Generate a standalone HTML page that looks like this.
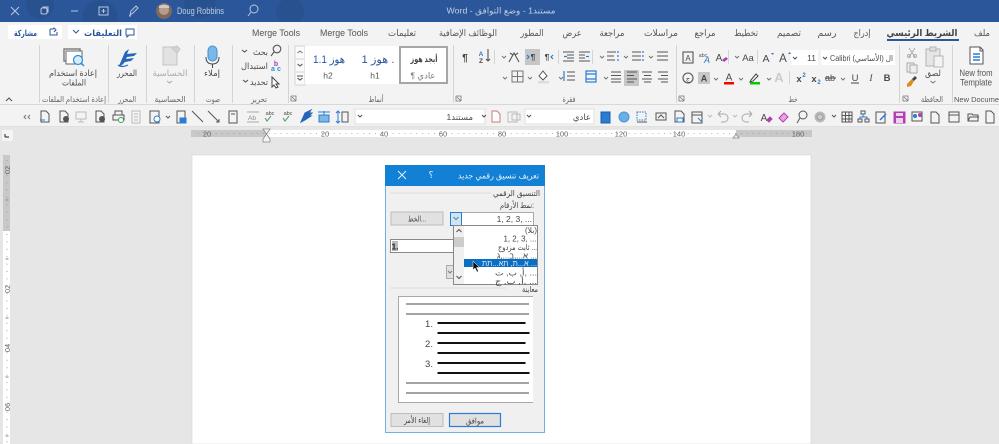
<!DOCTYPE html>
<html><head><meta charset="utf-8"><style>
html,body{margin:0;padding:0;background:#e6e6e6;width:999px;height:444px;overflow:hidden}
svg{display:block;filter:blur(.35px)}
text{font-family:"Liberation Sans","DejaVu Sans",sans-serif;font-size:9px;fill:#4a4a4a;text-anchor:middle}
.t{font-size:9px;fill:#555}
.g{font-size:8px;fill:#666}
.s{fill:none;stroke:#777;stroke-width:1}
.d{fill:none;stroke:#555;stroke-width:1.100}
.b{fill:none;stroke:#2b7cd3;stroke-width:1.200}
.r{font-size:7.500px;fill:#666}
.dg{font-size:8px;fill:#444}
</style></head><body>
<svg width="999" height="444" viewBox="0 0 999 444" xmlns="http://www.w3.org/2000/svg">
<rect width="999" height="444" fill="#e6e6e6"/>
<!-- title bar -->
<rect width="999" height="22" fill="#2b579a"/>
<g fill="#28528f"><circle cx="40" cy="5" r="14"/><circle cx="100" cy="18" r="18"/><circle cx="200" cy="2" r="16"/><circle cx="290" cy="12" r="14"/></g>
<g fill="none" stroke="#b9c7de" stroke-width="1">
<path d="M11 7l8 8M19 7l-8 8"/>
<rect x="41" y="8" width="6" height="6" rx="1.500"/><path d="M43 8v-1h5v5h-1"/>
<path d="M71 11h7"/>
<rect x="99" y="7" width="9" height="8"/><path d="M103.500 9v4M101.500 11h4"/>
<path d="M130 15l1-4 5-5 2 2-5 5zM129 16h2"/>
<circle cx="254" cy="9" r="4"/><path d="M251 12l-3 4"/>
</g>
<circle cx="164" cy="11" r="8" fill="#7d6a5d"/><circle cx="164" cy="10" r="5" fill="#b79c8b"/><path d="M159 6q5-3 10 0v2h-10z" fill="#ccc"/>
<text x="177" y="14" textLength="47" lengthAdjust="spacingAndGlyphs" style="font-size:9px;fill:#c2cfe3;text-anchor:start">Doug Robbins</text>
<text x="501" y="13.500" textLength="109" lengthAdjust="spacingAndGlyphs" direction="rtl" style="font-size:8.500px;fill:#c2cfe3">مستند1 - وضع التوافق - Word</text>
<!-- tabs and ribbon -->
<rect y="22" width="999" height="83" fill="#f3f3f3"/>
<rect y="104" width="999" height="1" fill="#d8d8d8"/>
<rect x="8" y="25" width="54" height="14" fill="#fff"/><rect x="68" y="25" width="69" height="14" fill="#fff"/>
<text x="25.500" y="36" textLength="23" lengthAdjust="spacingAndGlyphs" style="font-size:8.500px;font-weight:bold;fill:#2b579a">مشاركة</text>
<path d="M50 29h3l1-1 2 2-2 2M50 29v6h7v-3" fill="none" stroke="#2b579a"/>
<text x="103" y="36" textLength="38" lengthAdjust="spacingAndGlyphs" style="font-size:8.500px;font-weight:bold;fill:#2b579a">التعليقات</text>
<path d="M73 30l3 3 3-3" fill="none" stroke="#2b579a"/><path d="M126 29h8v6h-5l-2 2v-2h-1z" fill="none" stroke="#2b579a"/>
<text class="t" x="276" y="36" textLength="48" lengthAdjust="spacingAndGlyphs">Merge Tools</text>
<text class="t" x="344" y="36" textLength="48" lengthAdjust="spacingAndGlyphs">Merge Tools</text>
<text class="t" x="402" y="36" textLength="28" lengthAdjust="spacingAndGlyphs">تعليمات</text>
<text class="t" x="468" y="36" textLength="58" lengthAdjust="spacingAndGlyphs">الوظائف الإضافية</text>
<text class="t" x="532" y="36" textLength="23" lengthAdjust="spacingAndGlyphs">المطور</text>
<text class="t" x="572" y="36" textLength="19" lengthAdjust="spacingAndGlyphs">عرض</text>
<text class="t" x="612" y="36" textLength="25" lengthAdjust="spacingAndGlyphs">مراجعة</text>
<text class="t" x="661" y="36" textLength="34" lengthAdjust="spacingAndGlyphs">مراسلات</text>
<text class="t" x="705" y="36" textLength="21" lengthAdjust="spacingAndGlyphs">مراجع</text>
<text class="t" x="746" y="36" textLength="24" lengthAdjust="spacingAndGlyphs">تخطيط</text>
<text class="t" x="789" y="36" textLength="24" lengthAdjust="spacingAndGlyphs">تصميم</text>
<text class="t" x="827" y="36" textLength="19" lengthAdjust="spacingAndGlyphs">رسم</text>
<text class="t" x="862" y="36" textLength="17" lengthAdjust="spacingAndGlyphs">إدراج</text>
<text x="922" y="36" textLength="71" lengthAdjust="spacingAndGlyphs" style="font-size:9.500px;font-weight:bold;fill:#444">الشريط الرئيسي</text>
<text class="t" x="982" y="36" textLength="16" lengthAdjust="spacingAndGlyphs">ملف</text>
<rect x="887" y="39" width="72" height="2" fill="#2b579a"/>
<!-- separators -->
<g fill="#d4d4d4"><rect x="39" y="45" width="1" height="58"/><rect x="108" y="45" width="1" height="58"/><rect x="146" y="45" width="1" height="58"/><rect x="194" y="45" width="1" height="58"/><rect x="232" y="45" width="1" height="58"/><rect x="288" y="45" width="1" height="58"/><rect x="453" y="45" width="1" height="58"/><rect x="676" y="45" width="1" height="58"/><rect x="899" y="45" width="1" height="58"/><rect x="952" y="45" width="1" height="58"/></g>
<!-- group labels -->
<text class="g" x="74" y="102" textLength="64" lengthAdjust="spacingAndGlyphs">إعادة استخدام الملفات</text>
<text class="g" x="127" y="102" textLength="18" lengthAdjust="spacingAndGlyphs">المحرر</text>
<text class="g" x="170" y="102" textLength="31" lengthAdjust="spacingAndGlyphs">الحساسية</text>
<text class="g" x="213" y="102" textLength="14" lengthAdjust="spacingAndGlyphs">صوت</text>
<text class="g" x="259" y="102" textLength="16" lengthAdjust="spacingAndGlyphs">تحرير</text>
<text class="g" x="376" y="102" textLength="15" lengthAdjust="spacingAndGlyphs">أنماط</text>
<text class="g" x="569" y="102" textLength="13" lengthAdjust="spacingAndGlyphs">فقرة</text>
<text class="g" x="793" y="102" textLength="9" lengthAdjust="spacingAndGlyphs">خط</text>
<text class="g" x="932" y="102" textLength="22" lengthAdjust="spacingAndGlyphs">الحافظة</text>
<text x="954" y="102" style="font-size:7.500px;fill:#555;text-anchor:start">New Document</text>
<path d="M6 101l3-3 3 3" class="d"/>
<!-- reuse files -->
<rect x="64" y="49" width="16" height="12" fill="#fff" stroke="#777" stroke-width="1.400"/><rect x="66" y="51" width="16" height="13" fill="#fff" stroke="#666"/>
<circle cx="78" cy="60" r="4.500" fill="#d7ebfa" stroke="#2b8fd8" stroke-width="1.200"/><path d="M81 63l3 3" stroke="#2b8fd8" stroke-width="1.500"/>
<text x="73" y="76" textLength="48" lengthAdjust="spacingAndGlyphs" style="font-size:8.500px">إعادة استخدام</text><text x="74" y="85.500" textLength="24" lengthAdjust="spacingAndGlyphs" style="font-size:8.500px">الملفات</text>
<!-- editor -->
<path d="M119 66l6-14 4-3-2 5 10-1-3 3-7 1-1 2 8-1-3 3-6 1-3 3z" fill="#2566b8"/><path d="M118 65q4 3 10 0" fill="none" stroke="#2566b8" stroke-width="1.200"/>
<text x="127" y="76" textLength="20" lengthAdjust="spacingAndGlyphs" style="font-size:8.500px">المحرر</text>
<!-- sensitivity -->
<rect x="163" y="47" width="14" height="18" fill="#e2e2e2" stroke="#c4c4c4"/><path d="M172 48l5-2 3 3-3 4z" fill="#d4d4d4" stroke="#c4c4c4"/>
<text x="170" y="76" textLength="35" lengthAdjust="spacingAndGlyphs" style="font-size:8.500px;fill:#aaa">الحساسية</text><path d="M167 81l2.500 2 2.500-2" fill="none" stroke="#aaa"/>
<!-- dictate -->
<rect x="208" y="46" width="9" height="15" rx="4.500" fill="#7db7e8" stroke="#3f8fd4"/><path d="M206 57q0 7 6.500 7t6.500-7M212.500 64v4" fill="none" stroke="#444"/>
<text x="212" y="76" textLength="16" lengthAdjust="spacingAndGlyphs" style="font-size:8.500px">إملاء</text>
<!-- editing -->
<circle cx="277" cy="49" r="3.800" class="d"/><path d="M274 52l-3 4" class="d"/>
<text x="260.500" y="55" textLength="15" lengthAdjust="spacingAndGlyphs" style="font-size:8.500px">بحث</text><path d="M242 50l2.500 2 2.500-2" class="d"/>
<text x="254.500" y="69" textLength="27" lengthAdjust="spacingAndGlyphs" style="font-size:8.500px">استبدال</text>
<text x="276" y="66" style="font-size:7px;font-weight:bold;fill:#b040b0">b</text><text x="279" y="71" style="font-size:7px;font-weight:bold;fill:#2b8fd8">c</text><text x="273" y="71" style="font-size:7px;font-weight:bold;fill:#2b8fd8">a</text>
<text x="259" y="85" textLength="18" lengthAdjust="spacingAndGlyphs" style="font-size:8.500px">تحديد</text><path d="M243 80l2.500 2 2.500-2" class="d"/>
<path d="M272 77v10l2-2 2 3 2-1-2-3h3z" fill="#fff" stroke="#444"/>
<!-- styles gallery -->
<rect x="295" y="46" width="10" height="39" fill="#fafafa" stroke="#d4d4d4"/><path d="M295 59h10M295 72h10" stroke="#d4d4d4"/>
<path d="M297.500 53l2.500-2 2.500 2" class="s"/><path d="M297.500 64l2.500 2 2.500-2" class="d"/><path d="M297 76h6M297.500 78l2.500 2 2.500-2" class="d"/>
<rect x="305" y="46" width="143" height="38" fill="#fff"/>
<rect x="400" y="47" width="47" height="36" fill="#fff" stroke="#a6a6a6" stroke-width="2"/>
<text x="424" y="62" textLength="27" lengthAdjust="spacingAndGlyphs" style="font-size:8.500px;font-weight:bold;fill:#444">أبجد هوز</text>
<text x="423" y="78.500" textLength="25" lengthAdjust="spacingAndGlyphs" style="font-size:8.500px;fill:#777">¶ عادي</text>
<text x="378" y="63" textLength="33" lengthAdjust="spacingAndGlyphs" direction="rtl" style="font-size:11px;fill:#2b579a">. هوز 1</text>
<text x="375" y="78.500" style="font-size:8.500px;fill:#555">h1</text>
<text x="329" y="63" textLength="32" lengthAdjust="spacingAndGlyphs" style="font-size:11px;fill:#2b579a">هوز 1.1</text>
<text x="328" y="78.500" style="font-size:8.500px;fill:#555">h2</text>
<!-- dialog launchers -->
<g fill="none" stroke="#777" stroke-width=".8"><path d="M291 96h5v5M291 96v5h5M292 97l4 4"/><path d="M456 96h5v5M456 96v5h5M457 97l4 4"/><path d="M679 96h5v5M679 96v5h5M680 97l4 4"/><path d="M903 96h5v5M903 96v5h5M904 97l4 4"/></g>
<!-- paragraph rows -->
<rect x="525" y="49" width="15" height="16" fill="#c6c6c6"/><rect x="624" y="70" width="15" height="16" fill="#c6c6c6"/>
<text x="465" y="61" style="font-size:10px;font-weight:bold;fill:#444">¶</text>
<text x="481" y="56" style="font-size:6.500px;fill:#2b7cd3;font-weight:bold">A</text><text x="481" y="63" style="font-size:6.500px;fill:#444;font-weight:bold">Z</text><path d="M488 49v12M486 59l2 2 2-2" class="d"/>
<rect x="494" y="50" width="1" height="14" fill="#d4d4d4"/><rect x="558" y="50" width="1" height="14" fill="#d4d4d4"/><rect x="592" y="50" width="1" height="14" fill="#d4d4d4"/>
<path d="M502 56l2 2 2-2" class="s"/>
<path d="M509 62l5-9 5 9M510 53l3 2M518 53l-3 2" class="d"/>
<text x="533" y="60" style="font-size:8.500px;font-weight:bold;fill:#444">¶</text><path d="M527 55l2 2-2 2" class="b"/>
<text x="547" y="60" style="font-size:8.500px;font-weight:bold;fill:#444">¶</text><path d="M553 55l-2 2 2 2" class="b"/>
<g class="d"><path d="M563 52h11M567 55h7M567 58h7M563 61h11"/><path d="M579 52h11M579 55h6M579 58h6M579 61h11"/></g>
<path d="M564 56.500h3M586 56.500h3" class="b"/>
<path d="M600 56l2 2 2-2M624 56l2 2 2-2M649 56l2 2 2-2" class="s"/>
<g class="d"><path d="M607 52h9M607 56h7M607 60h8"/><path d="M632 52h9M632 56h9M632 60h9"/><path d="M657 52h11M657 56h11M657 60h11"/></g>
<g class="b"><path d="M618 51v2M618 55v2M618 59v2M643 51v2M643 55v2M643 59v2"/></g>
<!-- row2 -->
<path d="M503 77l2 2 2-2M528 77l2 2 2-2M559 77l2 2 2-2M604 77l2 2 2-2" class="s"/>
<rect x="512" y="71" width="11" height="11" class="s"/><path d="M517.500 71v11M512 76.500h11" class="s"/>
<path d="M539 76l4-5 4 5-4 4z" fill="#fff" stroke="#555"/><rect x="538" y="81" width="11" height="2.500" fill="#ddd"/>
<path d="M567 72h8M567 76h8M567 80h8" class="d"/><path d="M564 71v10" class="b"/>
<rect x="586" y="71" width="10" height="11" class="b"/><path d="M586 74h10M586 79h10" class="b"/>
<g class="d"><path d="M611 72h10M611 75.500h10M611 79h10M611 82h10"/><path d="M627 72h10M627 75.500h7M627 79h10M627 82h7"/><path d="M642 72h10M644 75.500h7M642 79h10M644 82h7"/><path d="M658 72h10M661 75.500h7M658 79h10M661 82h7"/></g>
<!-- font controls -->
<rect x="683" y="52" width="10" height="11" class="d"/><text x="688" y="61" style="font-size:8px">A</text>
<text x="703" y="57" style="font-size:5.500px;fill:#555">abc</text><text x="707" y="63" style="font-size:9px;font-style:italic;fill:#2b7cd3">A</text>
<text x="719" y="61" style="font-size:10px">A</text><path d="M722 60l4-3 2 2-4 3z" fill="#b040b0"/>
<rect x="728" y="50" width="1" height="14" fill="#d4d4d4"/><rect x="757" y="50" width="1" height="14" fill="#d4d4d4"/>
<path d="M735 56l2 2 2-2" class="s"/><text x="748" y="61" style="font-size:9.500px">Aa</text>
<text x="766" y="62" style="font-size:10.500px">A</text><text x="783" y="62" style="font-size:11.500px">A</text>
<path d="M771 53h3l-1.500 2zM788 54l1.500-2 1.500 2" fill="#2b7cd3"/>
<rect x="791" y="50" width="27" height="15" fill="#fff"/><rect x="821" y="50" width="74" height="15" fill="#fff"/>
<path d="M793 57l2 2 2-2M823 57l2 2 2-2" class="d"/>
<text x="816" y="61" style="font-size:8.500px;text-anchor:end">11</text>
<text x="830" y="61" textLength="63" lengthAdjust="spacingAndGlyphs" style="font-size:8px;text-anchor:start">Calibri (الأساسي) ال</text>
<circle cx="688" cy="78" r="5" class="d"/><text x="688" y="81" style="font-size:7px">ج</text>
<rect x="698" y="72" width="12" height="12" fill="#c8c8c8"/><text x="704" y="81.500" style="font-size:9px;font-weight:bold">A</text>
<path d="M714 78l2 2 2-2M739 78l2 2 2-2M767 78l2 2 2-2M841 78l2 2 2-2" class="s"/>
<text x="729" y="80.500" style="font-size:10px">A</text><rect x="724" y="82" width="10" height="2.500" fill="#f00"/>
<path d="M751 80l5-6 2 2-5 5-3 1z" fill="#fff" stroke="#444"/><rect x="750" y="82" width="10" height="2.500" fill="#0c0"/>
<text x="779" y="82" style="font-size:13px;fill:#ccc;font-weight:bold">A</text>
<rect x="789" y="71" width="1" height="13" fill="#d4d4d4"/>
<text x="799" y="82" style="font-size:9.500px;font-weight:bold">x</text><text x="804" y="77" style="font-size:6px;font-weight:bold;fill:#2b7cd3">2</text>
<text x="814" y="82" style="font-size:9.500px;font-weight:bold">x</text><text x="819" y="84" style="font-size:6px;font-weight:bold;fill:#2b7cd3">2</text>
<text x="830" y="81" style="font-size:9px">ab</text><path d="M825 78h11" class="d"/>
<text x="855" y="81" style="font-size:9.500px">U</text><path d="M851 83h8" class="d"/>
<text x="871" y="81" style="font-size:9.500px;font-style:italic;font-family:'Liberation Serif',serif">I</text>
<text x="887" y="81" style="font-size:9.500px;font-weight:bold">B</text>
<!-- clipboard -->
<path d="M909 48l6 9M915 48l-6 9" stroke="#aaa" fill="none"/><circle cx="909" cy="56" r="1.500" fill="none" stroke="#aaa"/><circle cx="915" cy="56" r="1.500" fill="none" stroke="#aaa"/>
<rect x="907" y="63" width="7" height="9" fill="#eee" stroke="#aaa"/><rect x="910" y="65" width="7" height="8" fill="#eee" stroke="#aaa"/>
<path d="M907 84l5-5 2 2-3 5-4 1z" fill="#e08a1e"/><path d="M912 79l3-3 2 2-3 3z" fill="#444"/>
<rect x="926" y="49" width="14" height="17" fill="#e5e5e5" stroke="#b5b5b5"/><rect x="930" y="47" width="6" height="4" fill="#ddd" stroke="#b5b5b5"/><rect x="934" y="56" width="9" height="11" fill="#f3f3f3" stroke="#b5b5b5"/>
<text x="933" y="76" textLength="16" lengthAdjust="spacingAndGlyphs" style="font-size:8.500px">لصق</text><path d="M930.500 81l2.500 2 2.500-2" class="s"/>
<!-- new from template -->
<path d="M970 47h10l3 3v14h-13zM980 47v4h3" fill="#fff" stroke="#555"/><path d="M973 54h7M973 57h7M973 60h7" stroke="#2b7cd3" stroke-width="1.500"/>
<text x="976" y="76" textLength="33" lengthAdjust="spacingAndGlyphs" style="font-size:9px;fill:#555">New from</text><text x="976" y="85.500" textLength="32" lengthAdjust="spacingAndGlyphs" style="font-size:9px;fill:#555">Template</text>
<!-- QAT -->
<rect y="105" width="999" height="22" fill="#f3f3f3"/><rect y="126" width="999" height="1" fill="#e0e0e0"/>
<path d="M26 115l-2 2 2 2M30 115l-2 2 2 2" class="s"/>
<g fill="none" stroke="#555">
<path d="M41 111h5l3 3v8h-8z"/><path d="M40 120h5" stroke="#2b7cd3"/>
<path d="M60 111h5l3 3v8h-8z"/><circle cx="66" cy="119" r="2.500" fill="#555"/>
<rect x="76" y="112" width="10" height="7" stroke="#bbb"/><path d="M81 119v3M78 122h6" stroke="#bbb"/>
<path d="M96 111h5l3 3v8h-8z"/><circle cx="102" cy="119" r="2.500" fill="#555"/>
<rect x="113" y="115" width="11" height="5"/><rect x="115" y="111" width="7" height="4"/><circle cx="121" cy="120" r="2.500" fill="#fff" stroke="#3a9a5a"/>
<rect x="132" y="111" width="8" height="12" stroke="#bbb"/><path d="M134 114h4M134 117h4M134 120h4" stroke="#bbb"/>
<rect x="150" y="111" width="9" height="12"/><circle cx="157" cy="119" r="3" fill="#fff" stroke="#2b7cd3"/>
<path d="M166 116l2 2 2-2"/>
<rect x="177" y="111" width="8" height="12"/><rect x="180" y="118" width="6" height="5" fill="#2b7cd3" stroke="#2b7cd3"/>
<path d="M192 111l11 11M208 111l11 11"/><path d="M216 122h3v-3"/>
<path d="M229 111h8v12h-8zM231 114h4"/>
<path d="M247 112h12M247 122h12" stroke="#aaa"/><text x="252" y="120" style="font-size:6.500px;fill:#888;stroke:none">Ab</text>
<path d="M265 118l2 3 4-5" stroke="#3a9a5a"/><text x="270" y="115" style="font-size:5.500px;stroke:none">abc</text>
<path d="M283 118l2 3 4-5" stroke="#3a9a5a"/><text x="288" y="115" style="font-size:5.500px;stroke:none">abc</text>
<path d="M301 122l4-9 6-3-2 3 3 0-3 3 2 0-6 4z" fill="#2566b8" stroke="#2566b8"/>
<rect x="319" y="115" width="10" height="7" fill="#7db7e8" stroke="#2b7cd3"/><path d="M318 112h12M324 111v4" stroke="#2b7cd3"/>
<rect x="342" y="112" width="6" height="10"/><path d="M338 111v12M336 113l2-2 2 2M336 121l2 2 2-2" stroke="#2b7cd3"/>
</g>
<rect x="355" y="109" width="130" height="15" fill="#fff" stroke="#e0e0e0"/>
<path d="M358 115l2 2 2-2M482 115l2 2 2-2" class="d"/>
<text x="473" y="120" style="font-size:8.500px;text-anchor:end">مستند1</text>
<path d="M492 111h5l3 3v8h-8z" fill="#fff" stroke="#c77"/>
<g fill="none" stroke="#555">
<rect x="508" y="112" width="9" height="10" stroke="#bbb"/><rect x="512" y="114" width="8" height="6" stroke="#bbb"/>
<rect x="601" y="112" width="9" height="11" fill="#2b7cd3" stroke="#1a5fa8"/>
<circle cx="624" cy="117" r="5" fill="#6ab0e8" stroke="#4a94d4"/>
<rect x="637" y="112" width="9" height="8" stroke="#2b7cd3" stroke-dasharray="1.500 1"/><path d="M637 122h10"/>
<rect x="656" y="113" width="10" height="7"/><path d="M658 118l3-3 3 3"/>
<path d="M675 111h6l3 3v8h-9z"/><rect x="677" y="118" width="6" height="4" stroke="#2b7cd3"/>
<rect x="692" y="112" width="10" height="11"/><path d="M692 115h10"/><path d="M698 118l4 4" stroke="#2b7cd3"/>
<path d="M708 115l2 2 2-2M733 115l2 2 2-2" stroke="#bbb"/>
<path d="M718 114h6a4 4 0 0 1 0 8h-3M718 114l3-3M718 114l3 3" stroke="#aaa"/>
<path d="M752 114h-6a4 4 0 0 0 0 8h3M752 114l-3-3M752 114l-3 3" stroke="#aaa"/>
<text x="764" y="121" style="font-size:10px;stroke:none">A</text><path d="M767 120l3-3 2 2-3 3z" fill="#b040b0" stroke="#b040b0"/>
<path d="M779 118l5-5 4 4-5 5z" fill="#e9a6dd" stroke="#b040b0"/>
<circle cx="803" cy="115" r="4"/><path d="M800 118l-3 5"/>
<circle cx="820" cy="117" r="5" fill="#bbb" stroke="#bbb"/><circle cx="820" cy="117" r="3" fill="#ccc" stroke="#999"/>
<path d="M832 115l2 2 2-2"/>
<rect x="842" y="112" width="10" height="10"/><path d="M845.500 112v10M849 112v10M842 115.500h10M842 119h10"/>
<rect x="861" y="111" width="4" height="3"/><rect x="858" y="119" width="4" height="3"/><rect x="865" y="119" width="4" height="3"/><path d="M863 114v3M860 119v-2h7v2" stroke="#2b7cd3"/>
<rect x="876" y="112" width="9" height="11"/><path d="M880 120l6-6" stroke="#2b7cd3" stroke-width="1.500"/>
<rect x="894" y="112" width="11" height="11" fill="#b040b0" stroke="#b040b0"/><rect x="896" y="113" width="7" height="3" fill="#f0d0ec" stroke="none"/><rect x="896" y="118" width="7" height="5" fill="#f0d0ec" stroke="none"/>
<rect x="912" y="112" width="10" height="9"/><circle cx="915" cy="116" r="2" fill="#2b7cd3" stroke="none"/><circle cx="920" cy="115" r="2" fill="#b040b0" stroke="none"/>
<path d="M931 112h5l3 3v8h-8z"/>
<rect x="949" y="112" width="10" height="10"/><path d="M949 115h10"/>
<path d="M968 114h4l1 1h5v6h-10zM968 121l2-4h9"/>
<path d="M986 111h5l3 3v9h-8z"/>
</g>
<rect x="525" y="109" width="69" height="15" fill="#fff" stroke="#e0e0e0"/>
<path d="M527 115l2 2 2-2" class="d"/>
<text x="591" y="120" style="font-size:8.500px;text-anchor:end">عادي</text>
<!-- corner + horizontal ruler -->
<rect x="2" y="130" width="11" height="11" fill="#f4f4f4"/><path d="M5 137v-3M5 137h4" stroke="#444" stroke-width="1.200" fill="none"/>
<rect x="191" y="130" width="621" height="7" fill="#fff"/>
<rect x="191" y="130" width="75" height="7" fill="#c8c8c8"/><rect x="736" y="130" width="76" height="7" fill="#c8c8c8"/>
<path d="M198 133.500H811" stroke="#999" stroke-width=".8" stroke-dasharray="1 4.900" fill="none"/>
<text class="r" x="207" y="136.300">20</text><text class="r" x="325" y="136.300">20</text><text class="r" x="384" y="136.300">40</text><text class="r" x="443" y="136.300">60</text><text class="r" x="502" y="136.300">80</text><text class="r" x="562" y="136.300">100</text><text class="r" x="621" y="136.300">120</text><text class="r" x="679" y="136.300">140</text><text class="r" x="798" y="136.300">180</text>
<path d="M263 129h7l-3.500 5 3.500 5v3h-7v-3l3.500-5z" fill="#f4f4f4" stroke="#888" stroke-width=".8"/>
<path d="M733 138l3-4 3 4z" fill="#f4f4f4" stroke="#888" stroke-width=".8"/>
<!-- vertical ruler -->
<rect x="3" y="155" width="7" height="289" fill="#fff"/><rect x="3" y="155" width="7" height="76" fill="#c8c8c8"/>
<path d="M7 160V444" stroke="#999" stroke-width=".9" stroke-dasharray="1 6.400" fill="none"/>
<path d="M5.500 200h3M5.500 259h3M5.500 318h3M5.500 377h3M5.500 436h3" stroke="#888"/>
<text class="r" transform="translate(7 170) rotate(-90)" y="3">02</text><text class="r" transform="translate(7 289) rotate(-90)" y="3">02</text><text class="r" transform="translate(7 348) rotate(-90)" y="3">04</text><text class="r" transform="translate(7 407) rotate(-90)" y="3">06</text>
<!-- page -->
<rect x="192" y="155" width="619" height="289" fill="#fff" stroke="#d6d6d6" stroke-width=".6"/>
<!-- dialog -->
<rect x="385.500" y="165.500" width="159" height="267" fill="#f0f0f0" stroke="#6fb0e8"/>
<rect x="385" y="165" width="160" height="21" fill="#1280d4"/>
<text x="498.500" y="178.500" textLength="81" lengthAdjust="spacingAndGlyphs" style="font-size:8.500px;fill:#e8f2fb">تعريف تنسيق رقمي جديد</text>
<text x="431" y="178" style="font-size:9px;fill:#e8f2fb">؟</text>
<path d="M398 171l8 8M406 171l-8 8" stroke="#e8f2fb" fill="none"/>
<path d="M390 193h101" stroke="#dcdcdc"/>
<text class="dg" x="516.500" y="196" textLength="47" lengthAdjust="spacingAndGlyphs">التنسيق الرقمي</text>
<text class="dg" x="517" y="208" textLength="34" lengthAdjust="spacingAndGlyphs">نمط الأرقام:</text>
<rect x="391" y="212" width="52" height="13" fill="#e1e1e1" stroke="#bdbdbd"/>
<text class="dg" x="417" y="221.500" textLength="18" lengthAdjust="spacingAndGlyphs">الخط...</text>
<rect x="450.500" y="212.500" width="83" height="13" fill="#fff" stroke="#aaa"/>
<rect x="450.500" y="212.500" width="11" height="13" fill="#cde6f7" stroke="#2b7cd3"/><path d="M453.500 217l2.500 2.500 2.500-2.500" class="s"/>
<text class="dg" x="532" y="222" style="text-anchor:end;font-size:8.500px">1, 2, 3, ...</text>
<rect x="390.500" y="239.500" width="63" height="13" fill="#fff" stroke="#888"/>
<rect x="392" y="241" width="6" height="10" fill="#bbb"/><text x="395" y="249.500" style="font-size:8.500px;font-weight:bold;fill:#222">1.</text>
<rect x="446.500" y="265.500" width="9" height="13" fill="#e1e1e1" stroke="#aaa"/><path d="M448 271l2 2 2-2" class="s"/>
<rect x="453.500" y="225.500" width="84" height="59" fill="#fff" stroke="#888"/>
<rect x="454" y="226" width="10" height="58" fill="#f0f0f0"/><rect x="454" y="237" width="10" height="10" fill="#cdcdcd"/>
<path d="M456.500 232l2.500-2.500 2.500 2.500M456.500 276l2.500 2.500 2.500-2.500" class="d"/>
<rect x="464" y="259" width="73" height="8" fill="#0a6fc4"/>
<text class="dg" x="531" y="233" textLength="12" lengthAdjust="spacingAndGlyphs">(بلا)</text>
<text class="dg" x="520" y="241.500" textLength="33" lengthAdjust="spacingAndGlyphs">1, 2, 3, ...</text>
<text class="dg" x="517.500" y="250" textLength="39" lengthAdjust="spacingAndGlyphs">ثابت مزدوج ...</text>
<text class="dg" x="517" y="258.500" textLength="40" lengthAdjust="spacingAndGlyphs">א...,ב...,ג ...</text>
<text x="509.500" y="266" textLength="55" lengthAdjust="spacingAndGlyphs" style="font-size:8px;fill:#dbeaf7">א...ת, תא...תת ...</text>
<text class="dg" x="516" y="275.500" textLength="42" lengthAdjust="spacingAndGlyphs">أ, ب, ت, ...</text>
<text class="dg" x="516" y="284" textLength="42" lengthAdjust="spacingAndGlyphs">أ, ب, ج, ...</text>
<path d="M473 261v9l2-2 2 4 1.500-.7-2-3.800h3z" fill="#111" stroke="#fff" stroke-width=".5"/>
<path d="M390 288h116" stroke="#dcdcdc"/>
<text class="dg" x="530" y="292" textLength="16" lengthAdjust="spacingAndGlyphs">معاينة</text>
<path d="M533 296.500H398.500V402.500H533" fill="#fff" stroke="#a8a8a8"/>
<g stroke="#a4a4a4" stroke-width="2" fill="none"><path d="M406 304h123M406 314h123M406 383h123M406 393h123"/></g>
<g stroke="#111" stroke-width="2" fill="none"><path d="M437.500 323h88M437.500 333h92M437.500 343h88M437.500 353h92M437.500 363h88M437.500 373h92"/></g>
<text x="429" y="327" style="font-size:9.500px;fill:#444">1.</text><text x="429" y="347" style="font-size:9.500px;fill:#444">2.</text><text x="429" y="367" style="font-size:9.500px;fill:#444">3.</text>
<rect x="391" y="413.500" width="52" height="13" fill="#e1e1e1" stroke="#bdbdbd"/>
<text class="dg" x="417" y="423" textLength="26" lengthAdjust="spacingAndGlyphs">إلغاء الأمر</text>
<rect x="449.500" y="413.500" width="51" height="13" fill="#e1e1e1" stroke="#2b7cd3" stroke-width="1.200"/>
<text class="dg" x="475" y="423.500" textLength="18" lengthAdjust="spacingAndGlyphs">موافق</text>
</svg>
</body></html>
